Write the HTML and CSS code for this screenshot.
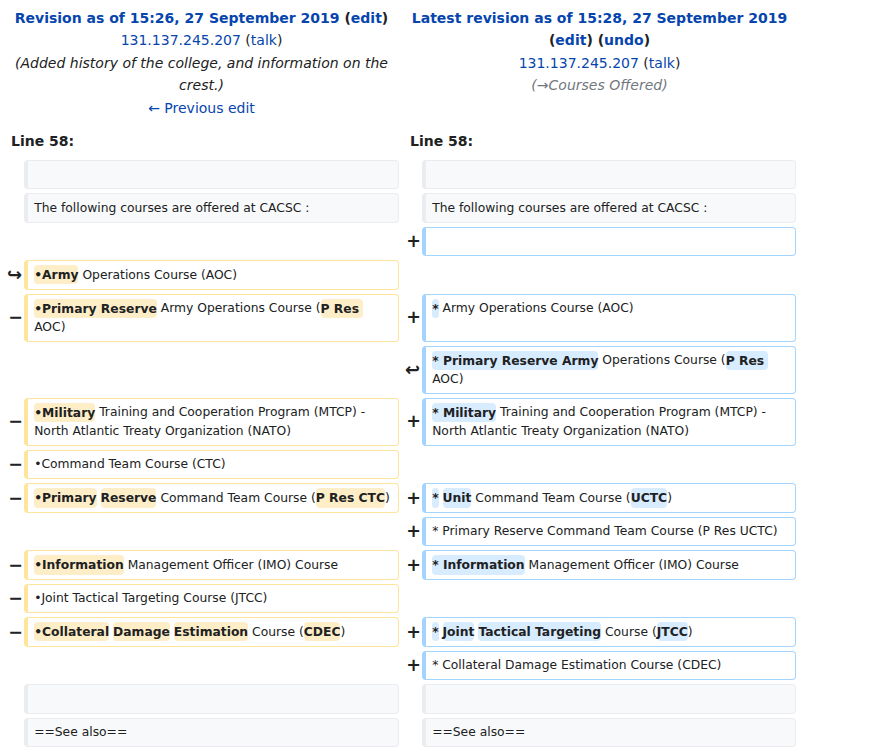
FILE: index.html
```html
<!DOCTYPE html>
<html lang="en">
<head>
<meta charset="utf-8">
<title>Difference between revisions</title>
<link rel="stylesheet" href="styles.css">
</head>
<body>
<div class="diff">
  <div class="title">
    <div><strong><a class="nw" href="#">Revision as of 15:26, 27 September 2019</a> (<a href="#">edit</a>)</strong></div>
    <div><a href="#">131.137.245.207</a> (<a href="#">talk</a>)</div>
    <div class="summary">(Added history of the college, and information on the crest.)</div>
    <div><a href="#">← Previous edit</a></div>
  </div>
  <div class="title">
    <div><strong><a class="nw" href="#">Latest revision as of 15:28, 27 September 2019</a> (<a href="#">edit</a>) (<a href="#">undo</a>)</strong></div>
    <div><a href="#">131.137.245.207</a> (<a href="#">talk</a>)</div>
    <div class="summary gray">(<a class="gray" href="#">→Courses Offered</a>)</div>
  </div>

  <div class="lineno">Line 58:</div>
  <div class="lineno">Line 58:</div>

  <div class="marker"></div><div class="line ctx"> </div>
  <div class="marker"></div><div class="line ctx"> </div>

  <div class="marker"></div><div class="line ctx">The following courses are offered at CACSC :</div>
  <div class="marker"></div><div class="line ctx">The following courses are offered at CACSC :</div>

  <div class="empty"></div>
  <div class="marker">+</div><div class="line add"> </div>

  <div class="marker moved">↪</div><div class="line del"><span class="ch">•Army</span> Operations Course (AOC)</div>
  <div class="empty"></div>

  <div class="marker">−</div><div class="line del"><span class="ch">•Primary Reserve</span> Army Operations Course (<span class="ch">P Res </span>AOC)</div>
  <div class="marker">+</div><div class="line add"><span class="ch">*</span> Army Operations Course (AOC)</div>

  <div class="empty"></div>
  <div class="marker moved">↩</div><div class="line add"><span class="ch">* Primary Reserve Army</span> Operations Course (<span class="ch">P Res </span>AOC)</div>

  <div class="marker">−</div><div class="line del"><span class="ch">•Military</span> Training and Cooperation Program (MTCP) - North Atlantic Treaty Organization (NATO)</div>
  <div class="marker">+</div><div class="line add"><span class="ch">* Military</span> Training and Cooperation Program (MTCP) - North Atlantic Treaty Organization (NATO)</div>

  <div class="marker">−</div><div class="line del">•Command Team Course (CTC)</div>
  <div class="empty"></div>

  <div class="marker">−</div><div class="line del"><span class="ch">•Primary</span> <span class="ch">Reserve</span> Command Team Course (<span class="ch">P Res CTC</span>)</div>
  <div class="marker">+</div><div class="line add"><span class="ch">*</span> <span class="ch">Unit</span> Command Team Course (<span class="ch">UCTC</span>)</div>

  <div class="empty"></div>
  <div class="marker">+</div><div class="line add">* Primary Reserve Command Team Course (P Res UCTC)</div>

  <div class="marker">−</div><div class="line del"><span class="ch">•Information</span> Management Officer (IMO) Course</div>
  <div class="marker">+</div><div class="line add"><span class="ch">* Information</span> Management Officer (IMO) Course</div>

  <div class="marker">−</div><div class="line del">•Joint Tactical Targeting Course (JTCC)</div>
  <div class="empty"></div>

  <div class="marker">−</div><div class="line del"><span class="ch">•Collateral</span> <span class="ch">Damage</span> <span class="ch">Estimation</span> Course (<span class="ch">CDEC</span>)</div>
  <div class="marker">+</div><div class="line add"><span class="ch">*</span> <span class="ch">Joint</span> <span class="ch">Tactical Targeting</span> Course (<span class="ch">JTCC</span>)</div>

  <div class="empty"></div>
  <div class="marker">+</div><div class="line add">* Collateral Damage Estimation Course (CDEC)</div>

  <div class="marker"></div><div class="line ctx"> </div>
  <div class="marker"></div><div class="line ctx"> </div>

  <div class="marker"></div><div class="line ctx">==See also==</div>
  <div class="marker"></div><div class="line ctx">==See also==</div>
</div>
</body>
</html>
```

FILE: styles.css
```css
html, body {
  margin: 0;
  padding: 0;
  background: #ffffff;
}

body {
  font-family: "DejaVu Sans", sans-serif;
  font-size: 14px;
  line-height: 1.6;
  color: #202122;
}

a {
  color: #0645ad;
  text-decoration: none;
}

.diff {
  display: grid;
  grid-template-columns: 16px 375px 15px 374px;
  column-gap: 4px;
  row-gap: 4px;
  padding: 4px;
  width: max-content;
}

.title {
  grid-column: span 2;
  text-align: center;
  padding: 3px 7px;
}

.nw {
  white-space: nowrap;
}

.summary {
  font-style: italic;
}

.gray,
.summary.gray {
  color: #72777d;
}

.lineno {
  grid-column: span 2;
  font-weight: bold;
  padding: 3.8px 7px;
}

.empty {
  grid-column: span 2;
}

.marker {
  display: flex;
  align-items: center;
  justify-content: flex-end;
  margin-right: -3px;
  font-size: 17.5px;
  font-weight: bold;
  line-height: 1.2;
  color: #202122;
}

.marker.moved {
  margin-right: -2px;
  font-size: 18px;
}

.line {
  font-size: 12.32px;
  line-height: 18.6px;
  padding: 4.45px 6.16px;
  border: 1px solid;
  border-left-width: 4px;
  border-radius: 4px;
  white-space: pre-wrap;
  overflow-wrap: break-word;
  min-height: 18.6px;
}

.ctx {
  background: #f8f9fa;
  border-color: #eaecf0;
}

.del {
  border-color: #ffe49c;
}

.add {
  border-color: #a3d3ff;
}

.ch {
  font-weight: bold;
  border-radius: 0.33em;
  padding: 0.22em 0;
}

.del .ch {
  background: #feeec8;
}

.add .ch {
  background: #d8ecff;
}
```
